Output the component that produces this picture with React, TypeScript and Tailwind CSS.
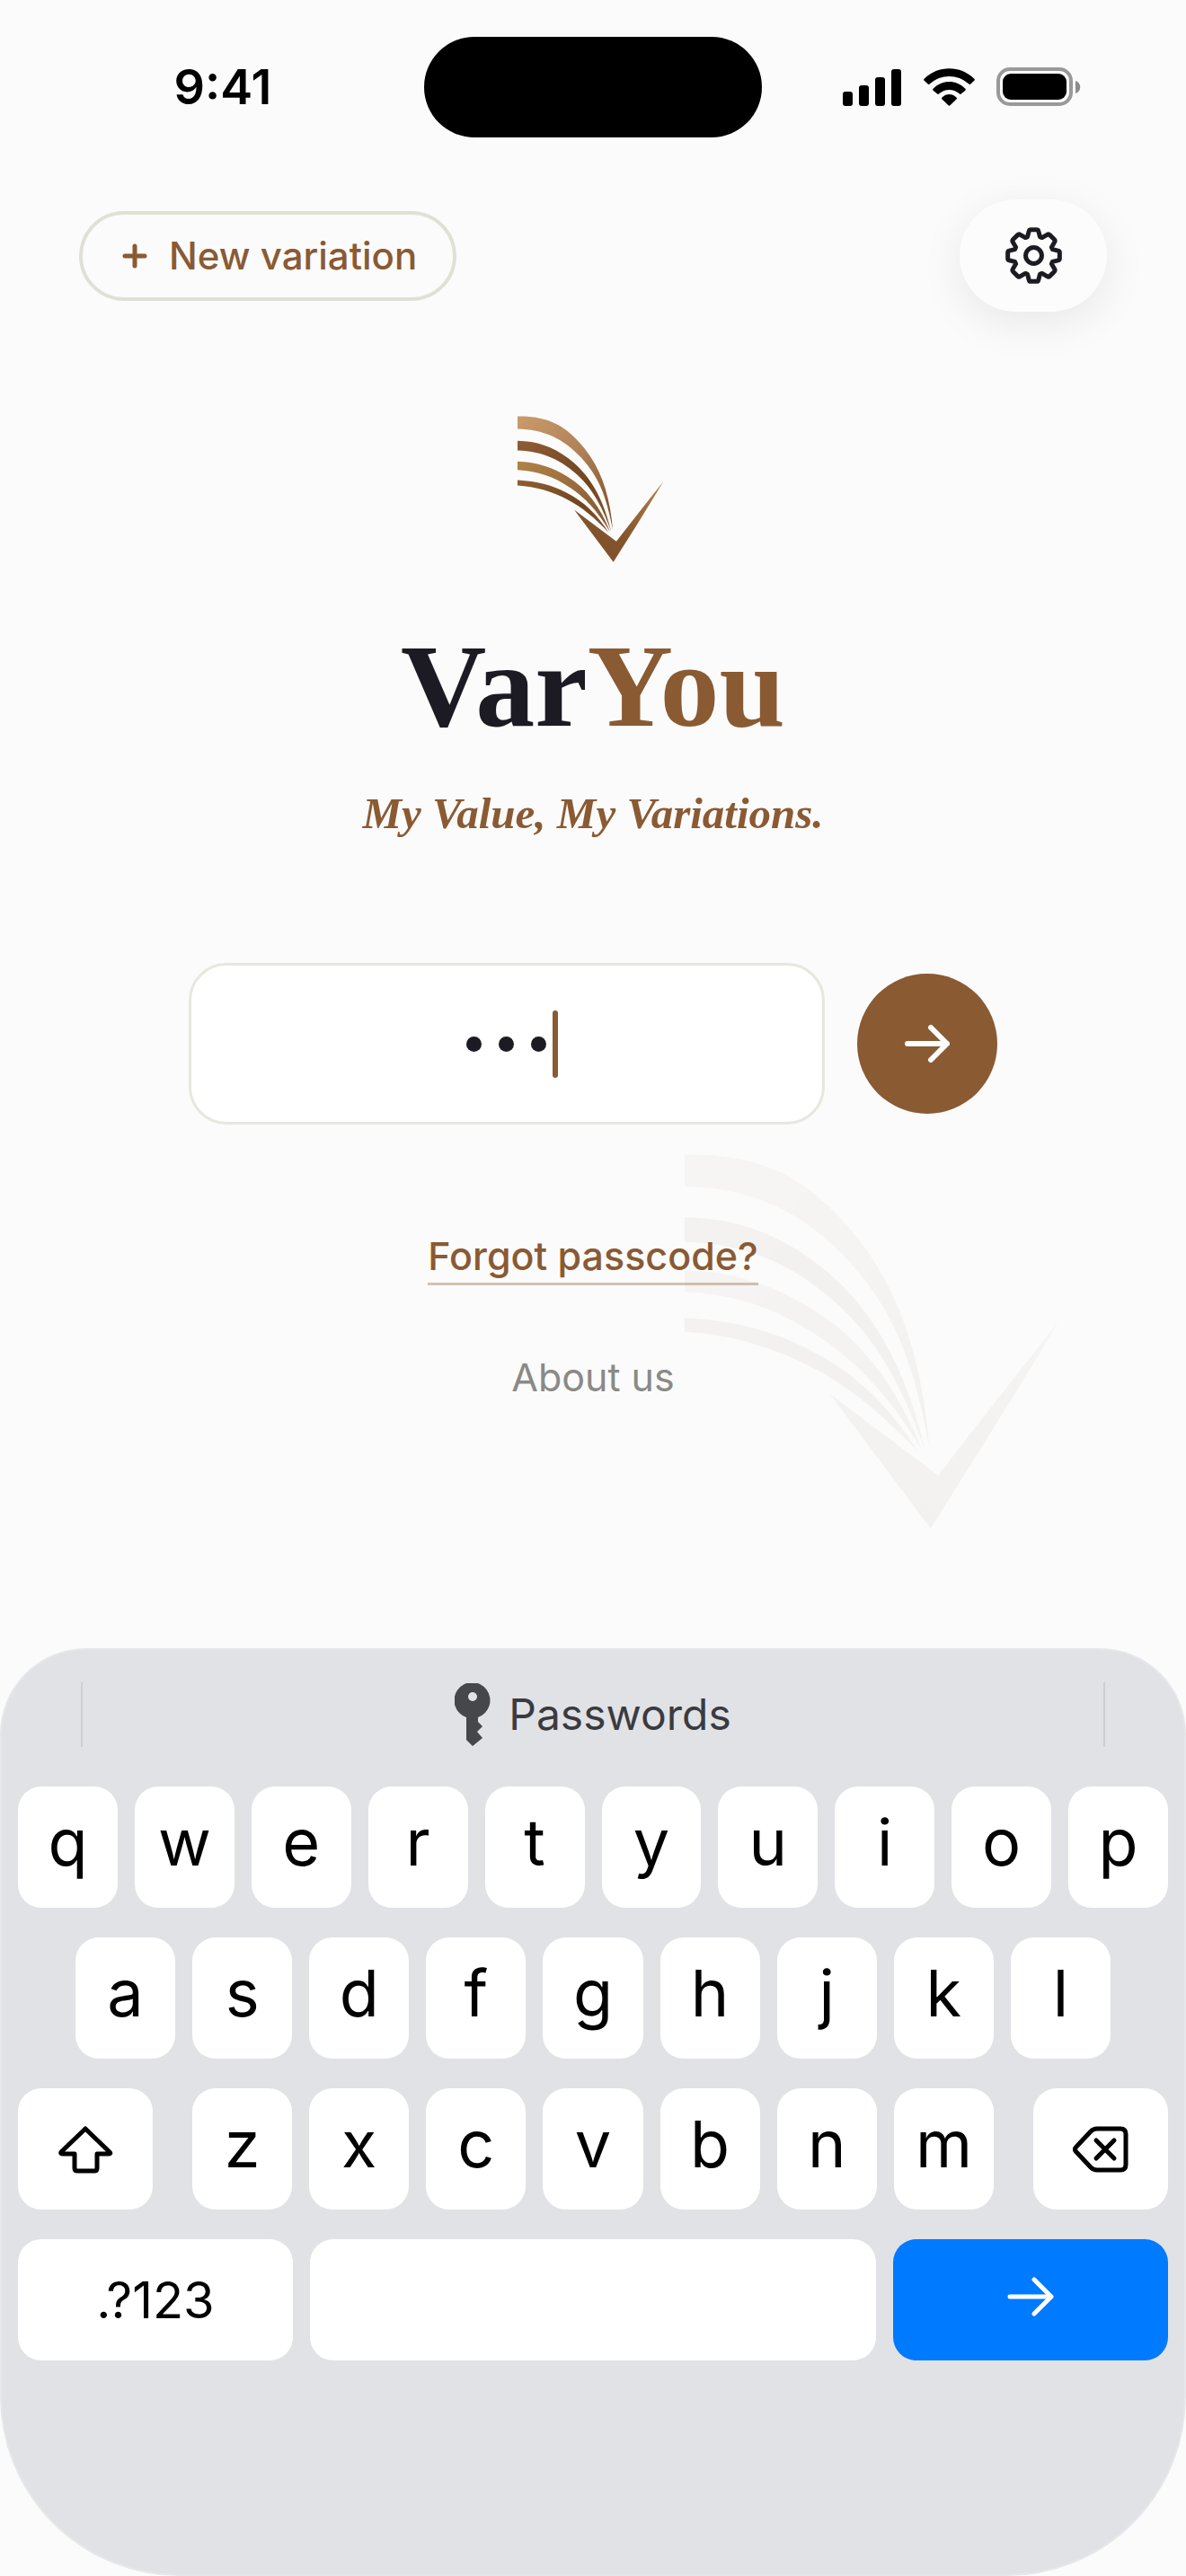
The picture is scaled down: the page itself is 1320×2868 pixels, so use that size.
import { useState } from "react";
import type { ReactNode } from "react";

const TOP_ROW = ["q", "w", "e", "r", "t", "y", "u", "i", "o", "p"];
const HOME_ROW = ["a", "s", "d", "f", "g", "h", "j", "k", "l"];
const BOTTOM_ROW = ["z", "x", "c", "v", "b", "n", "m"];

function LogoMark({ id, className }: { id: string; className?: string }) {
	return (
		<svg viewBox="108 100 504 488" className={className} aria-hidden="true">
			<defs>
				<linearGradient id={`${id}-light`} x1="0" y1="0" x2="1" y2="1">
					<stop offset="0" stopColor="#c99c6b" />
					<stop offset="0.5" stopColor="#b08055" />
					<stop offset="1" stopColor="#7a4a22" />
				</linearGradient>
				<linearGradient id={`${id}-dark`} x1="0" y1="0" x2="1" y2="1">
					<stop offset="0" stopColor="#8f5d34" />
					<stop offset="0.6" stopColor="#70451f" />
					<stop offset="1" stopColor="#8b5a32" />
				</linearGradient>
				<linearGradient id={`${id}-gold`} x1="0" y1="0" x2="1" y2="1">
					<stop offset="0" stopColor="#b08348" />
					<stop offset="1" stopColor="#7f5430" />
				</linearGradient>
				<linearGradient id={`${id}-check`} x1="0" y1="1" x2="1" y2="0">
					<stop offset="0" stopColor="#7d4f28" />
					<stop offset="0.45" stopColor="#85552d" />
					<stop offset="1" stopColor="#b5854f" />
				</linearGradient>
			</defs>
			<path
				fill={`url(#${id}-light)`}
				d="M108 101C190 100 250 120 305 178C380 255 415 350 426 480C404 360 375 300 325 244C262 174 195 145 108 143Z"
			/>
			<path
				fill={`url(#${id}-dark)`}
				d="M108 183C175 184 230 204 285 247C350 298 395 375 420 484C386 390 352 335 300 290C245 242 185 217 108 215Z"
			/>
			<path
				fill={`url(#${id}-gold)`}
				d="M108 252C175 254 225 272 275 303C340 343 385 405 417 487C375 415 330 370 285 340C230 303 180 284 108 280Z"
			/>
			<path
				fill={`url(#${id}-dark)`}
				d="M108 314C175 318 220 330 270 355C330 385 375 430 412 488C365 440 325 405 275 379C225 353 170 336 108 332Z"
			/>
			<path
				fill={`url(#${id}-check)`}
				d="M297 413L438 519Q520 412 595 319Q512 456 428 588Z"
			/>
		</svg>
	);
}

function StatusBar() {
	return (
		<div className="grid grid-cols-[1fr_376px_1fr] items-center pt-[41px]">
			<span className="pl-6 text-center text-[54px] leading-[64px] font-semibold text-black">
				9:41
			</span>
			<div className="h-28 rounded-full bg-black" />
			<div className="flex items-center justify-center gap-6 pr-7">
				<svg viewBox="0 0 66 42" className="h-[42px] w-[66px]" aria-hidden="true">
					<rect x="0" y="26" width="11" height="16" rx="3" />
					<rect x="18" y="19" width="11" height="23" rx="3" />
					<rect x="36" y="10" width="11" height="32" rx="3" />
					<rect x="54" y="1" width="11" height="41" rx="3" />
				</svg>
				<svg
					viewBox="0 0 172 126"
					className="h-[42px] w-[57px]"
					aria-hidden="true"
				>
					<path d="M2 35C49-11 123-11 170 35Q173 38 170 41L157 53Q154 55 151 52C114 18 58 18 21 52Q18 55 15 53L2 41Q-1 38 2 35Z" />
					<path d="M32 68C63 37 109 37 140 68Q143 71 140 74L126 86Q123 88 120 85C100 68 72 68 52 85Q49 88 46 86L32 74Q29 71 32 68Z" />
					<path d="M62 98C76 84 96 84 110 98Q113 101 110 104L89 124Q86 127 83 124L62 104Q59 101 62 98Z" />
				</svg>
				<svg viewBox="0 0 94 44" className="h-11 w-[94px]" aria-hidden="true">
					<rect
						x="2"
						y="2"
						width="81"
						height="39"
						rx="13"
						fill="none"
						stroke="#999"
						strokeWidth="4"
					/>
					<rect x="7" y="7" width="71" height="29" rx="9" />
					<path d="M88 15C95 17 95 27 88 29Z" fill="#8c8c8c" />
				</svg>
			</div>
		</div>
	);
}

function GearIcon() {
	return (
		<svg
			viewBox="0 0 190 190"
			className="size-[63px]"
			fill="none"
			stroke="#1c1b22"
			strokeWidth="15"
			strokeLinejoin="round"
			aria-hidden="true"
		>
			<path d="M79 13Q80 8 85 8H105Q110 8 111 13L116 32L123 35L140 25Q145 22 149 26L164 41Q168 45 165 50L155 67L158 74L177 79Q182 80 182 85V105Q182 110 177 111L158 116L155 123L165 140Q168 145 164 149L149 164Q145 168 140 165L123 155L116 158L111 177Q110 182 105 182H85Q80 182 79 177L74 158L67 155L50 165Q45 168 41 164L26 149Q22 145 25 140L35 123L32 116L13 111Q8 110 8 105V85Q8 80 13 79L32 74L35 67L25 50Q22 45 26 41L41 26Q45 22 50 25L67 35L74 32Z" />
			<circle cx="95" cy="95" r="27" />
		</svg>
	);
}

function Key({
	label,
	className = "w-[111px]",
	children,
}: {
	label?: string;
	className?: string;
	children?: ReactNode;
}) {
	return (
		<button
			type="button"
			aria-label={label}
			className={`flex h-[135px] items-center justify-center rounded-[26px] bg-white ${className}`}
		>
			{children}
		</button>
	);
}

function LetterKey({ letter }: { letter: string }) {
	return (
		<Key className="min-w-0 flex-1 pb-3 text-[72px] leading-20">{letter}</Key>
	);
}

function Keyboard() {
	return (
		<div className="flex flex-1 flex-col rounded-t-[96px] rounded-b-[200px] border-2 border-[#e6e7ea] bg-[#e1e2e6] px-[18px] pt-9 text-black">
			<div className="mx-[70px] flex h-[72px] items-center justify-center border-x-2 border-[#cdced2]">
				<button
					type="button"
					className="flex items-center gap-5 text-[48px] leading-[60px] text-[#3a3b3f]"
				>
					<svg
						viewBox="0 0 40 70"
						className="h-[70px] w-10"
						fill="#46474b"
						aria-hidden="true"
					>
						<path
							fillRule="evenodd"
							d="M13 38A20 20 0 1 1 26 38V43L31 48L25 54L31 61L20 70L13 63ZM20 10A5 5 0 0 0 20 20A5 5 0 0 0 20 10Z"
						/>
					</svg>
					Passwords
				</button>
			</div>
			<div className="mt-11 flex flex-col gap-[33px]">
				<div className="flex gap-[19px]">
					{TOP_ROW.map((l) => (
						<LetterKey key={l} letter={l} />
					))}
				</div>
				<div className="flex gap-[19px] px-16">
					{HOME_ROW.map((l) => (
						<LetterKey key={l} letter={l} />
					))}
				</div>
				<div className="flex gap-11">
					<Key label="Shift" className="w-[150px]">
						<svg
							viewBox="0 0 62 54"
							className="h-[54px] w-[62px]"
							fill="none"
							stroke="currentColor"
							strokeWidth="5"
							strokeLinejoin="round"
							aria-hidden="true"
						>
							<path d="M31 4L4 30Q3 32 6 32H19V48Q19 51 22 51H41Q44 51 44 48V32H57Q60 32 58 30Z" />
						</svg>
					</Key>
					<div className="flex flex-1 gap-[19px]">
						{BOTTOM_ROW.map((l) => (
							<LetterKey key={l} letter={l} />
						))}
					</div>
					<Key label="Delete" className="w-[150px]">
						<svg
							viewBox="0 0 62 54"
							className="h-[54px] w-[62px]"
							fill="none"
							stroke="currentColor"
							strokeWidth="5"
							strokeLinecap="round"
							strokeLinejoin="round"
							aria-hidden="true"
						>
							<path d="M27 4H53Q59 4 59 10V44Q59 50 53 50H27Q23 50 20 47L4 30Q1 27 4 24L20 7Q23 4 27 4Z" />
							<path d="M26 17L46 37M46 17L26 37" />
						</svg>
					</Key>
				</div>
				<div className="flex gap-[19px]">
					<Key className="w-[306px] text-[56px] leading-[64px]">.?123</Key>
					<Key label="Space" className="flex-1" />
					<button
						type="button"
						aria-label="Go"
						className="flex h-[135px] w-[306px] items-center justify-center rounded-[26px] bg-[#007aff] pb-2 text-white"
					>
						<svg
							viewBox="0 0 52 44"
							className="h-11 w-[52px]"
							fill="none"
							stroke="currentColor"
							strokeWidth="5"
							strokeLinecap="round"
							strokeLinejoin="round"
							aria-hidden="true"
						>
							<path d="M3 22H49M30 3L49 22L30 41" />
						</svg>
					</button>
				</div>
			</div>
		</div>
	);
}

export default function App() {
	const [passcode, setPasscode] = useState("123");

	return (
		<div className="flex min-h-screen flex-col bg-[#fbfbfb] font-['Inter',sans-serif]">
			<StatusBar />
			<header className="flex items-center justify-between px-[88px] pt-[69px]">
				<button
					type="button"
					className="flex h-[100px] items-center gap-6 rounded-full border-4 border-[#e1e0d6] pr-10 pl-11 text-[42px] leading-12 font-medium text-[#8a5a33]"
				>
					<svg
						viewBox="0 0 28 28"
						className="size-7"
						stroke="currentColor"
						strokeWidth="5"
						strokeLinecap="round"
						aria-hidden="true"
					>
						<path d="M14 3V25M3 14H25" />
					</svg>
					New variation
				</button>
				<button
					type="button"
					aria-label="Settings"
					className="flex h-[125px] w-[164px] items-center justify-center rounded-full bg-[#fcfcfc] shadow-[0_12px_48px_rgba(0,0,0,0.08)]"
				>
					<GearIcon />
				</button>
			</header>

			<main className="flex flex-col items-center pt-[116px]">
				<LogoMark id="logo" className="h-[163px] w-[168px]" />
				<h1 className="mt-16 font-['Liberation_Serif',serif] text-[132px] leading-[148px] font-bold text-[#1c1b24]">
					Var<span className="text-[#8a5a33]">You</span>
				</h1>
				<p className="mt-[38px] font-['Liberation_Serif',serif] text-[49px] leading-[60px] font-bold text-[#8a5a33] italic">
					My Value, My Variations.
				</p>

				<form
					className="mt-[136px] flex w-full items-center gap-9 px-[210px]"
					onSubmit={(e) => e.preventDefault()}
				>
					<div className="relative min-w-0 flex-1">
						<input
							type="password"
							aria-label="Passcode"
							value={passcode}
							onChange={(e) => setPasscode(e.target.value)}
							className="block h-[180px] w-full rounded-[42px] border-3 border-[#e8e7df] bg-white text-center text-transparent outline-none"
						/>
						<div className="pointer-events-none absolute inset-0 flex items-center justify-center pl-3">
							<div className="flex gap-[19px]">
								{Array.from(passcode).map((_, i) => (
									<span key={i} className="size-[17px] rounded-full bg-[#1c1b24]" />
								))}
							</div>
							<span className="ml-[7px] h-[75px] w-1.5 rounded-full bg-[#8a5a33]" />
						</div>
					</div>
					<button
						type="submit"
						aria-label="Continue"
						className="flex size-[156px] items-center justify-center rounded-full bg-[#8a5a33] text-white"
					>
						<svg
							viewBox="0 0 50 42"
							className="h-[42px] w-[50px]"
							fill="none"
							stroke="currentColor"
							strokeWidth="6"
							strokeLinecap="round"
							strokeLinejoin="round"
							aria-hidden="true"
						>
							<path d="M3 21H47M29 3L47 21L29 39" />
						</svg>
					</button>
				</form>

				<div className="relative flex w-full flex-col items-center pt-[118px]">
					<LogoMark
						id="watermark"
						className="absolute top-8 right-[127px] h-[418px] w-[431px] opacity-5 saturate-50"
					/>
					<a
						href="#forgot"
						className="relative border-b-3 border-[#8a5a33]/35 pb-0.5 text-[43px] leading-[56px] font-medium text-[#8a5a33]"
					>
						Forgot passcode?
					</a>
					<a
						href="#about"
						className="relative mt-[72px] mb-[272px] text-[43px] leading-[60px] text-[#8a8a86]"
					>
						About us
					</a>
				</div>
			</main>

			<Keyboard />
		</div>
	);
}
